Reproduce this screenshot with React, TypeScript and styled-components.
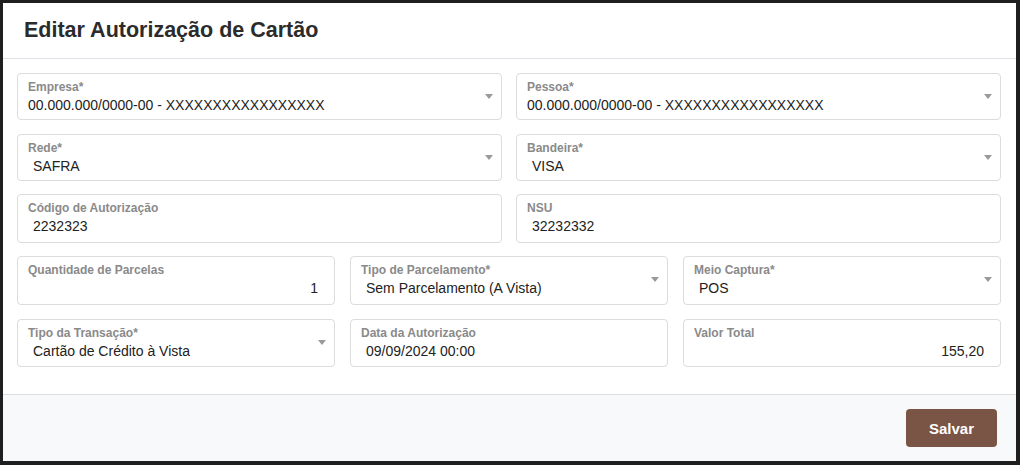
import React from "react";
import styled, { createGlobalStyle } from "styled-components";

const Global = createGlobalStyle`
  html, body { margin: 0; padding: 0; background: #1e1e1e; }
  body { font-family: "Liberation Sans", Arial, sans-serif; }
  * { box-sizing: border-box; }
`;

const Backdrop = styled.div`
  width: 1020px;
  height: 465px;
  padding: 3px 4px 4px 3px;
  background: #1f1f1f;
`;

const Modal = styled.div`
  width: 1013px;
  height: 458px;
  background: #fff;
  display: flex;
  flex-direction: column;
`;

const Header = styled.div`
  height: 56px;
  flex: none;
  display: flex;
  align-items: center;
  padding-left: 21px;
  border-bottom: 1px solid #dee2e6;
`;

const Title = styled.h1`
  margin: 0;
  font-size: 21.5px;
  font-weight: 700;
  color: #2b2b2b;
`;

const Body = styled.div`
  flex: 1;
  padding: 14px 15px 0 14px;
  display: flex;
  flex-direction: column;
`;

const Row = styled.div<{ $cols: number; $top: number }>`
  display: grid;
  grid-template-columns: repeat(${(p) => p.$cols}, 1fr);
  column-gap: ${(p) => (p.$cols === 3 ? 15 : 14)}px;
  margin-top: ${(p) => p.$top}px;
`;

const Field = styled.div<{ $h: number }>`
  position: relative;
  height: ${(p) => p.$h}px;
  border: 1px solid #dcdcdc;
  border-radius: 4px;
  padding: 6px 10px 0 10px;
  display: flex;
  flex-direction: column;
`;

const Label = styled.div`
  font-size: 12px;
  font-weight: 700;
  color: #8a8a8a;
  line-height: 14px;
`;

const Value = styled.div<{ $indent?: boolean; $right?: boolean }>`
  font-size: 14px;
  color: #222;
  line-height: 18px;
  margin-top: 2px;
  padding-left: ${(p) => (p.$indent ? 5 : 0)}px;
  padding-right: ${(p) => (p.$right ? 6 : 0)}px;
  text-align: ${(p) => (p.$right ? "right" : "left")};
  white-space: nowrap;
`;

const Caret = styled.span`
  position: absolute;
  right: 8px;
  top: 20px;
  width: 0;
  height: 0;
  border-left: 4px solid transparent;
  border-right: 4px solid transparent;
  border-top: 5px solid #9a9a9a;
`;

const Footer = styled.div`
  height: 67px;
  flex: none;
  border-top: 1px solid #dcdcdc;
  background: #f8f9fa;
  display: flex;
  align-items: center;
  justify-content: flex-end;
  padding-right: 19px;
`;

const SaveButton = styled.button`
  width: 91px;
  height: 38px;
  border: none;
  border-radius: 4px;
  background: #7a5444;
  color: #fff;
  font-family: "Liberation Sans", Arial, sans-serif;
  font-size: 15px;
  font-weight: 700;
  cursor: pointer;
`;

type F = { label: string; value: string; h: number; select?: boolean; indent?: boolean; right?: boolean };

const FormField = ({ label, value, h, select, indent, right }: F) => (
  <Field $h={h}>
    <Label>{label}</Label>
    <Value $indent={indent} $right={right}>{value}</Value>
    {select && <Caret />}
  </Field>
);

export default function App() {
  return (
    <Backdrop>
      <Global />
      <Modal>
        <Header>
          <Title>Editar Autorização de Cartão</Title>
        </Header>
        <Body>
          <Row $cols={2} $top={0}>
            <FormField h={47} label="Empresa*" value="00.000.000/0000-00 - XXXXXXXXXXXXXXXXX" select />
            <FormField h={47} label="Pessoa*" value="00.000.000/0000-00 - XXXXXXXXXXXXXXXXX" select />
          </Row>
          <Row $cols={2} $top={14}>
            <FormField h={47} label="Rede*" value="SAFRA" select indent />
            <FormField h={47} label="Bandeira*" value="VISA" select indent />
          </Row>
          <Row $cols={2} $top={13}>
            <FormField h={49} label="Código de Autorização" value="2232323" indent />
            <FormField h={49} label="NSU" value="32232332" indent />
          </Row>
          <Row $cols={3} $top={13}>
            <FormField h={49} label="Quantidade de Parcelas" value="1" right />
            <FormField h={49} label="Tipo de Parcelamento*" value="Sem Parcelamento (A Vista)" select indent />
            <FormField h={49} label="Meio Captura*" value="POS" select indent />
          </Row>
          <Row $cols={3} $top={14}>
            <FormField h={48} label="Tipo da Transação*" value="Cartão de Crédito à Vista" select indent />
            <FormField h={48} label="Data da Autorização" value="09/09/2024 00:00" indent />
            <FormField h={48} label="Valor Total" value="155,20" right />
          </Row>
        </Body>
        <Footer>
          <SaveButton>Salvar</SaveButton>
        </Footer>
      </Modal>
    </Backdrop>
  );
}
